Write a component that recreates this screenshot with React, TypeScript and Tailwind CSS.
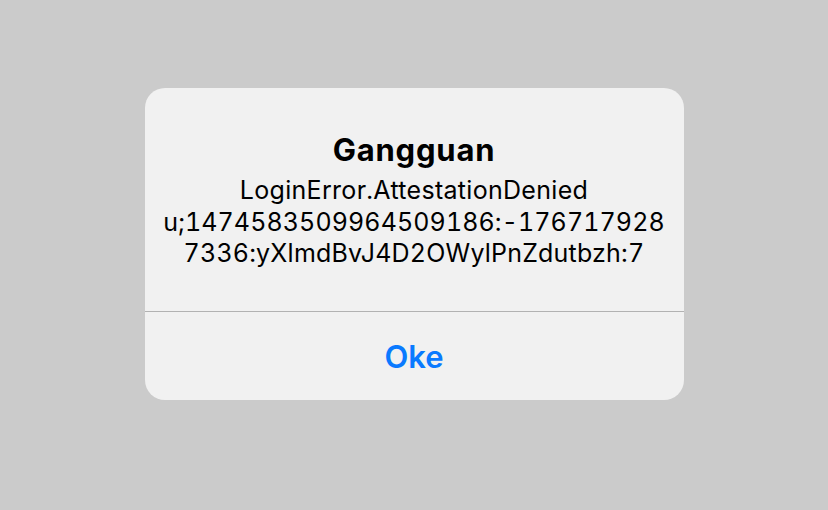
export default function App() {
  return (
    <div className="w-[828px] h-[510px] bg-[#cbcbcb] flex items-center justify-center font-['Inter',sans-serif]">
      <div className="w-[539px] h-[312px] -mt-[22px] bg-[#f1f1f1] rounded-[20px] flex flex-col overflow-hidden">
        <div className="flex-1 flex flex-col items-center pt-[43px] text-black">
          <h2 className="text-[31px] leading-[38px] font-bold tracking-[0.8px]">Gangguan</h2>
          <p className="mt-[6px] text-[25px] leading-[31.5px] text-center tracking-[0.3px] tabular-nums">
            <span className="block">LoginError.AttestationDenied</span>
            <span className="block tracking-[0.1px]">u;1474583509964509186:-176717928</span>
            <span className="block tracking-[0.2px]">7336:yXlmdBvJ4D2OWylPnZdutbzh:7</span>
          </p>
        </div>
        <div className="h-px bg-[#b2b2b2]" />
        <button className="h-[88px] pt-[2px] text-[31px] font-semibold text-[#0a7aff]">Oke</button>
      </div>
    </div>
  );
}
